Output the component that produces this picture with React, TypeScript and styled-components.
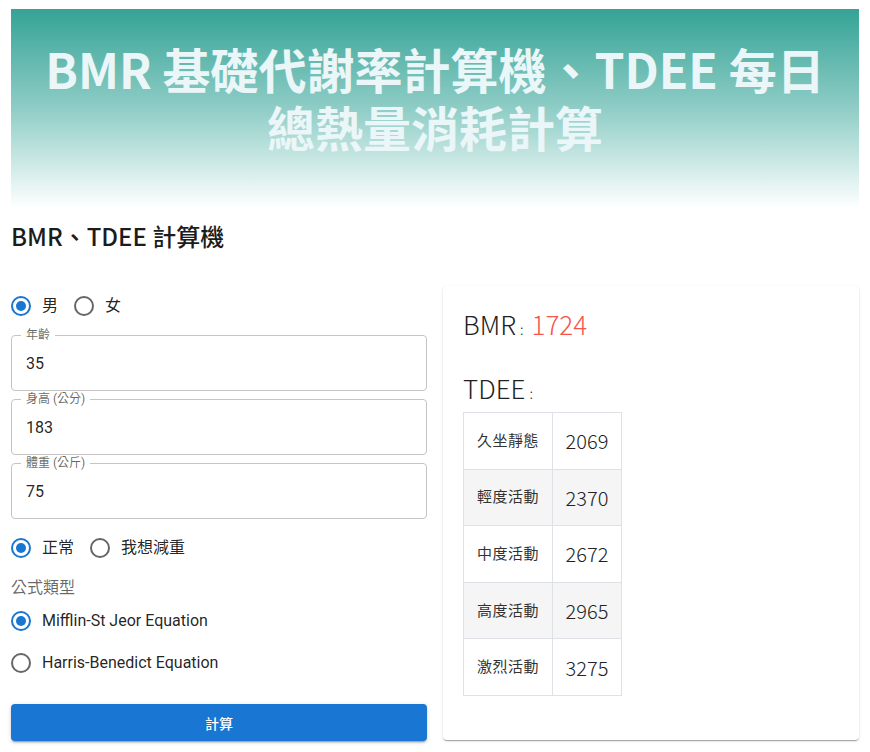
import React, { useState } from 'react';
import styled, { createGlobalStyle } from 'styled-components';

const GlobalStyle = createGlobalStyle`
  html, body {
    margin: 0;
    padding: 0;
    background: #fff;
    font-family: Roboto, "Noto Sans CJK TC", sans-serif;
    color: rgba(0, 0, 0, 0.87);
  }
  * { box-sizing: border-box; }
`;

const Page = styled.div`
  padding: 9px 11px 11px;
  width: 870px;
`;

const Banner = styled.header`
  height: 199px;
  background: linear-gradient(180deg, #35a396 0%, #8fcdc6 50%, #ffffff 100%);
  display: flex;
  justify-content: center;
  padding-top: 30px;
`;

const BannerTitle = styled.h1`
  margin: 0;
  width: 800px;
  text-align: center;
  font-family: "Noto Sans CJK TC", "Noto Sans", sans-serif;
  font-size: 48px;
  font-weight: 700;
  line-height: 58px;
  color: #eaf6f8;
`;

const Heading = styled.h2`
  margin: 12px 0 0;
  font-family: "Noto Sans CJK TC", "Noto Sans", sans-serif;
  font-size: 24px;
  font-weight: 500;
  line-height: 32px;
  color: #1c1c1c;
`;

const Columns = styled.div`
  display: grid;
  grid-template-columns: 416px 416px;
  gap: 16px;
  margin-top: 33px;
  align-items: stretch;
`;

const Form = styled.div`
  display: flex;
  flex-direction: column;
`;

const RadioRow = styled.div<{ $column?: boolean; $top?: number }>`
  display: flex;
  flex-direction: ${p => (p.$column ? 'column' : 'row')};
  align-items: flex-start;
  margin-top: ${p => p.$top ?? 0}px;
`;

const RadioLabel = styled.label`
  display: inline-flex;
  align-items: center;
  height: 42px;
  margin-left: -11px;
  margin-right: 16px;
  cursor: pointer;
  font-size: 16px;
  color: rgba(0, 0, 0, 0.87);
`;

const RadioBox = styled.span`
  width: 42px;
  height: 42px;
  display: inline-flex;
  align-items: center;
  justify-content: center;
`;

const LabelText = styled.span`
  font-family: Roboto, "Noto Sans CJK TC", sans-serif;
  font-size: 16px;
  line-height: 1.5;
`;

const Field = styled.div`
  position: relative;
  height: 56px;
  border: 1px solid #c4c4c4;
  border-radius: 4px;
  margin-top: 8px;
  display: flex;
  align-items: center;
  padding: 0 14px;
`;

const FieldLabel = styled.span`
  position: absolute;
  top: -9px;
  left: 9px;
  padding: 0 5px;
  background: #fff;
  font-size: 12px;
  line-height: 16px;
  color: rgba(0, 0, 0, 0.6);
  font-family: Roboto, "Noto Sans CJK TC", sans-serif;
`;

const FieldValue = styled.span`
  font-size: 16px;
  color: rgba(0, 0, 0, 0.87);
  margin-top: 1px;
`;

const GroupLabel = styled.div`
  margin-top: 7px;
  font-size: 16px;
  line-height: 24px;
  color: rgba(0, 0, 0, 0.6);
`;

const Button = styled.button`
  margin-top: 20px;
  height: 37px;
  border: none;
  border-radius: 4px;
  background: #1976d2;
  color: #fff;
  font-family: Roboto, "Noto Sans CJK TC", sans-serif;
  font-size: 14px;
  font-weight: 500;
  box-shadow: 0 3px 1px -2px rgba(0,0,0,0.2), 0 2px 2px 0 rgba(0,0,0,0.14), 0 1px 5px 0 rgba(0,0,0,0.12);
  cursor: pointer;
`;

const Card = styled.section`
  border-radius: 4px;
  background: #fff;
  box-shadow: 0 2px 1px -1px rgba(0,0,0,0.2), 0 1px 1px 0 rgba(0,0,0,0.14), 0 1px 3px 0 rgba(0,0,0,0.12);
  padding: 19px 20px 20px;
  margin: 1px 0 1px;
  font-family: "Noto Sans CJK TC", "Noto Sans", sans-serif;
`;

const Stat = styled.div<{ $gap?: number }>`
  font-size: 26px;
  font-weight: 300;
  line-height: 38px;
  color: #222;
  margin-top: ${p => p.$gap ?? 0}px;
`;

const Colon = styled.span`
  font-size: 14px;
  margin: 0 8px 0 4px;
`;

const Hot = styled.span`
  color: #f4564a;
`;

const Table = styled.table`
  border-collapse: collapse;
`;

const Row = styled.tr<{ $shade: boolean }>`
  background: ${p => (p.$shade ? '#f5f5f5' : '#fff')};
`;

const NameCell = styled.td`
  border: 1px solid #dee2e6;
  width: 89px;
  height: 56.6px;
  padding: 0 0 3px;
  text-align: center;
  font-size: 15px;
  letter-spacing: 0.5px;
  color: #333;
`;

const ValueCell = styled.td`
  border: 1px solid #dee2e6;
  width: 69px;
  height: 56.6px;
  text-align: center;
  font-size: 20px;
  font-weight: 300;
  color: #222;
`;

function RadioIcon({ checked }: { checked: boolean }) {
  const c = checked ? '#1976d2' : 'rgba(0,0,0,0.6)';
  return (
    <svg width="24" height="24" viewBox="0 0 24 24">
      <circle cx="12" cy="12" r="9" fill="none" stroke={c} strokeWidth="2" />
      {checked && <circle cx="12" cy="12" r="5" fill={c} />}
    </svg>
  );
}

function Radio({ label, checked, onPick }: { label: string; checked: boolean; onPick: () => void }) {
  return (
    <RadioLabel onClick={onPick}>
      <RadioBox><RadioIcon checked={checked} /></RadioBox>
      <LabelText>{label}</LabelText>
    </RadioLabel>
  );
}

const tdee = [
  ['久坐靜態', '2069'],
  ['輕度活動', '2370'],
  ['中度活動', '2672'],
  ['高度活動', '2965'],
  ['激烈活動', '3275'],
];

export default function App() {
  const [sex, setSex] = useState('男');
  const [goal, setGoal] = useState('正常');
  const [formula, setFormula] = useState('Mifflin-St Jeor Equation');

  return (
    <Page>
      <GlobalStyle />
      <Banner>
        <BannerTitle>BMR 基礎代謝率計算機、TDEE 每日總熱量消耗計算</BannerTitle>
      </Banner>
      <Heading>BMR、TDEE 計算機</Heading>
      <Columns>
        <Form>
          <RadioRow>
            {['男', '女'].map(s => (
              <Radio key={s} label={s} checked={sex === s} onPick={() => setSex(s)} />
            ))}
          </RadioRow>
          <Field><FieldLabel>年齡</FieldLabel><FieldValue>35</FieldValue></Field>
          <Field><FieldLabel>身高 (公分)</FieldLabel><FieldValue>183</FieldValue></Field>
          <Field><FieldLabel>體重 (公斤)</FieldLabel><FieldValue>75</FieldValue></Field>
          <RadioRow $top={8}>
            {['正常', '我想減重'].map(g => (
              <Radio key={g} label={g} checked={goal === g} onPick={() => setGoal(g)} />
            ))}
          </RadioRow>
          <GroupLabel>公式類型</GroupLabel>
          <RadioRow $column>
            {['Mifflin-St Jeor Equation', 'Harris-Benedict Equation'].map(f => (
              <Radio key={f} label={f} checked={formula === f} onPick={() => setFormula(f)} />
            ))}
          </RadioRow>
          <Button>計算</Button>
        </Form>
        <Card>
          <Stat>BMR<Colon>:</Colon><Hot>1724</Hot></Stat>
          <Stat $gap={21}>TDEE<Colon>:</Colon></Stat>
          <Table>
            <tbody>
              {tdee.map(([name, val], i) => (
                <Row key={name} $shade={i % 2 === 1}>
                  <NameCell>{name}</NameCell>
                  <ValueCell>{val}</ValueCell>
                </Row>
              ))}
            </tbody>
          </Table>
        </Card>
      </Columns>
    </Page>
  );
}
